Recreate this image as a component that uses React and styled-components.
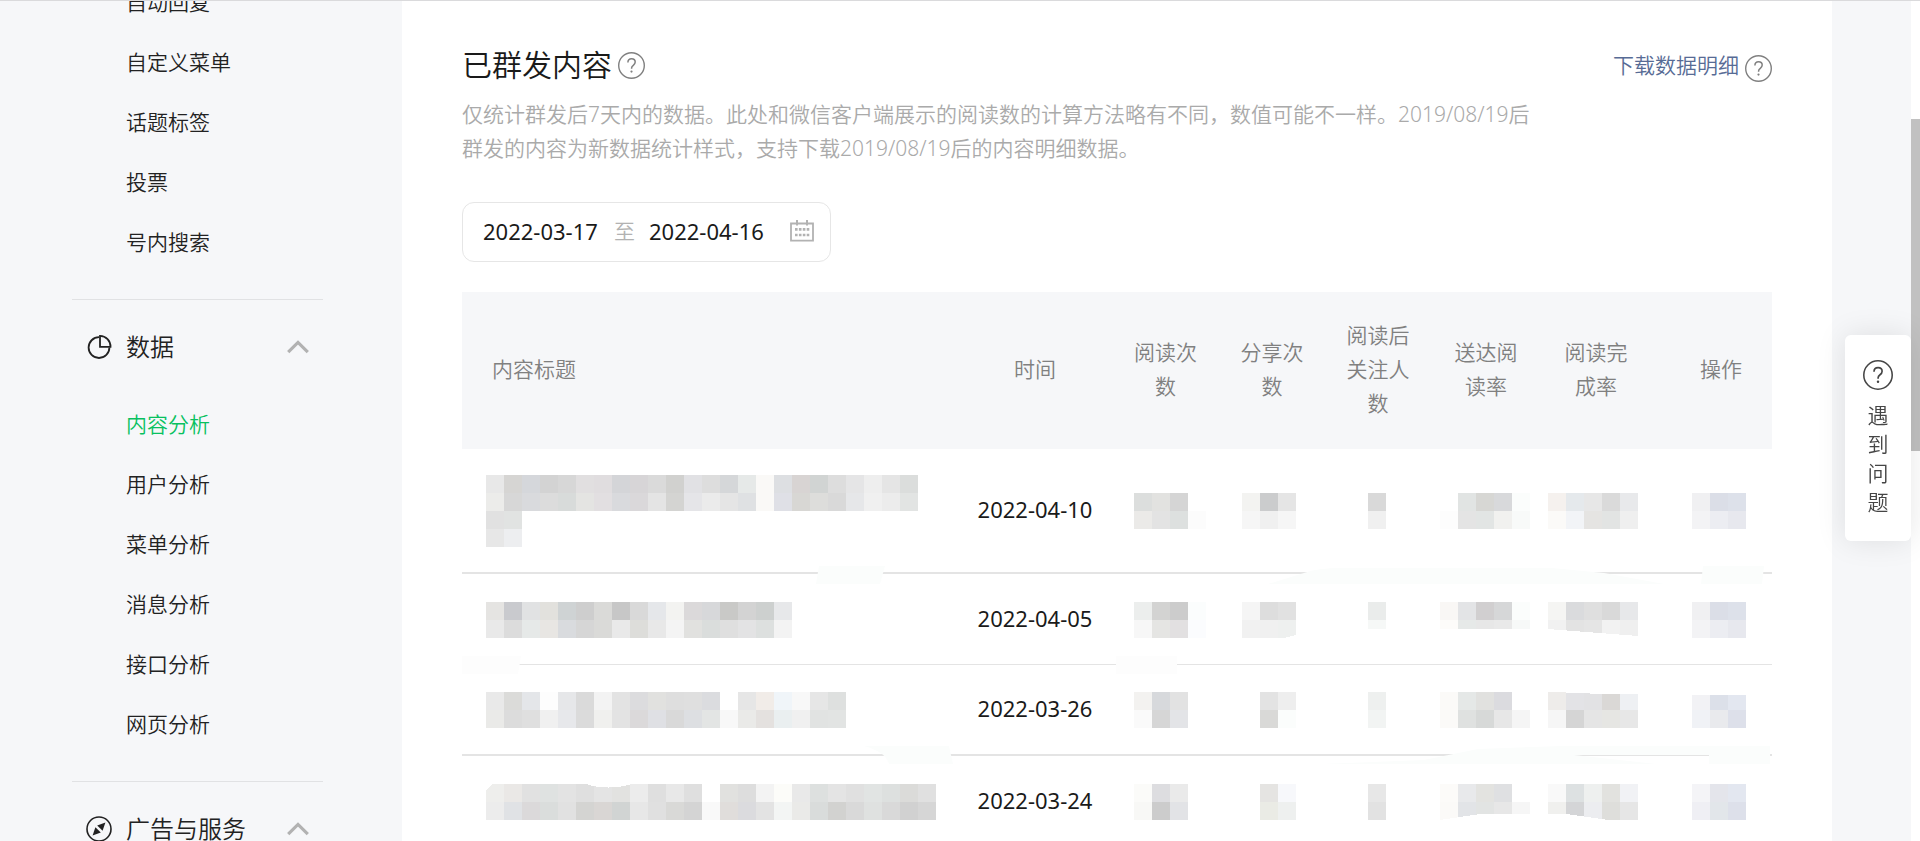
import styled, { createGlobalStyle, css } from "styled-components";

const GlobalStyle = createGlobalStyle`
  * {
    box-sizing: border-box;
  }

  body {
    margin: 0;
    background-color: #f6f7f9;
    color: #1a1a1a;
    font-family: "Noto Sans", "Noto Sans CJK SC", sans-serif;
    font-size: 21px;
    font-weight: 350;
    line-height: 34px;
  }

  button,
  input {
    font: inherit;
    color: inherit;
    border: none;
    padding: 0;
    background: none;
  }

  a {
    color: inherit;
    text-decoration: none;
  }
`;

const Page = styled.div`
  display: flex;
  height: 100vh;
  overflow: hidden;
  border-top: 1px solid #dadadc;
`;

const Sidebar = styled.nav`
  flex: 0 0 402px;
  padding: 0 79px 0 72px;
`;

const MenuList = styled.ul`
  list-style: none;
  margin: 0;
  padding: 0 0 27px 54px;
  border-bottom: 1px solid #e1e2e4;

  /* the first group is already scrolled past the top */
  &:first-child {
    margin-top: -29px;
  }
`;

const MenuLink = styled.a`
  display: block;
  line-height: 60px;
  color: ${(props) => (props.$active ? "#07c160" : "#222")};
`;

const MenuHeading = styled.button`
  display: flex;
  align-items: center;
  width: 100%;
  height: 94px;
  padding: 0 14px;
  font-size: 24px;
  color: #222;
  text-align: left;
`;

const MenuTitle = styled.span`
  flex: 1;
  padding-left: 14px;
`;

const Main = styled.main`
  flex: 1;
  min-width: 0;
  padding: 43px 60px 0;
  background-color: #fff;
`;

const Gutter = styled.div`
  flex: 0 0 79px;
`;

const ScrollTrack = styled.div`
  flex: 0 0 9px;
  padding-top: 118px;
  background-color: #fff;
`;

const ScrollThumb = styled.div`
  height: 332px;
  background-color: #c1c1c1;
`;

const Header = styled.header`
  display: flex;
  align-items: center;
  justify-content: space-between;
`;

const TitleGroup = styled.div`
  display: flex;
  align-items: center;
  gap: 6px;
`;

const Title = styled.h2`
  margin: 0;
  font-size: 30px;
  font-weight: 350;
  line-height: 42px;
`;

const Download = styled.div`
  display: flex;
  align-items: flex-end;
  gap: 6px;
`;

const DownloadLink = styled.a`
  color: #576b95;
`;

const HelpButton = styled.button`
  display: flex;
  color: #808080;
`;

const Description = styled.p`
  max-width: 1080px;
  margin: 11px 0 37px;
  color: #aaa;
`;

const DateRange = styled.div`
  display: flex;
  align-items: center;
  width: fit-content;
  height: 60px;
  padding: 0 16px 2px 20px;
  border: 1px solid #e6e6e6;
  border-radius: 12px;
`;

const DateInput = styled.input`
  width: 117px;
  font-size: 22px;
  font-weight: 400;
  outline: none;
`;

const DateDivider = styled.span`
  padding: 0 14px;
  color: #b2b2b2;
`;

const CalendarButton = styled.button`
  display: flex;
  margin-left: 24px;
`;

const TableWrap = styled.div`
  position: relative;
  margin-top: 30px;
`;

const Table = styled.table`
  width: 100%;
  table-layout: fixed;
  border-collapse: separate;
  border-spacing: 0;
`;

const Col = styled.col`
  width: ${(props) => props.$width};
`;

const Th = styled.th`
  height: 157px;
  padding: 0 20px 3px;
  background-color: #f6f7f9;
  color: #808080;
  font-weight: 350;
  text-align: center;

  ${(props) =>
    props.$align === "left" &&
    css`
      padding-left: 30px;
      text-align: left;
    `}
  ${(props) =>
    props.$align === "right" &&
    css`
      padding-right: 30px;
      text-align: right;
    `}
`;

const Row = styled.tr`
  height: ${(props) => (props.$tall ? "125px" : "91px")};
`;

const Td = styled.td`
  padding: 1px 0 0 ${(props) => props.$inset}px;
  border-bottom: ${(props) => (props.$thick ? "2px" : "1px")} solid #e4e4e4;
  vertical-align: middle;
`;

const DateTd = styled(Td)`
  padding: 0 0 3px;
  font-size: 22px;
  font-weight: 400;
  text-align: center;
`;

const MosaicSvg = styled.svg`
  display: block;
`;

const Strokes = styled.svg`
  position: absolute;
  top: 0;
  left: 0;
  overflow: visible;
  pointer-events: none;
`;

const Feedback = styled.button`
  position: fixed;
  top: 335px;
  right: 9px;
  display: flex;
  flex-direction: column;
  align-items: center;
  gap: 11px;
  width: 66px;
  padding: 25px 18px 24px;
  border-radius: 6px;
  background-color: #fff;
  box-shadow: 0 0 30px rgba(0, 0, 0, 0.1);
  color: #454545;
`;

const FeedbackText = styled.span`
  width: 21px;
  line-height: 29px;
  word-break: break-all;
`;

const CELL = 18;

/* Hidden values: two (or more) lines of colored cells, "-" leaves a hole. */
function Mosaic({ lines, trim }) {
  const rows = lines.map((line) => line.split(" "));
  const width = Math.max(...rows.map((row) => row.length)) * CELL;

  return (
    <MosaicSvg
      width={width}
      height={rows.length * CELL}
      shapeRendering="crispEdges"
      aria-hidden="true"
    >
      {rows.map((row, y) =>
        row.map(
          (color, x) =>
            color !== "-" && (
              <rect
                key={`${x}-${y}`}
                x={x * CELL}
                y={y * CELL}
                width={CELL}
                height={CELL}
                fill={`#${color}`}
              />
            )
        )
      )}
      {trim && <path d={trim} fill="#fff" />}
    </MosaicSvg>
  );
}

function HelpIcon({ size = 27 }) {
  return (
    <svg width={size} height={size} viewBox="0 0 27 27" fill="none">
      <circle cx="13.5" cy="13.5" r="12.8" stroke="currentColor" strokeWidth="1.4" />
      <path
        d="M9.9 10.6c0-2.3 1.5-3.8 3.7-3.8s3.6 1.3 3.6 3.3c0 1.5-.7 2.3-1.9 3.2-1.2.9-1.7 1.5-1.7 2.6v.9"
        stroke="currentColor"
        strokeWidth="1.5"
      />
      <circle cx="13.5" cy="19.6" r="1.1" fill="currentColor" />
    </svg>
  );
}

function PieIcon() {
  return (
    <svg width="26" height="26" viewBox="0 0 26 26" fill="none" stroke="#222" strokeWidth="1.8">
      <path d="M13 3.2a10.4 10.4 0 1 0 10.4 10.4" />
      <path d="M14 1.8v11h10.5A10.7 10.7 0 0 0 14 1.8z" />
    </svg>
  );
}

function CompassIcon() {
  return (
    <svg width="26" height="26" viewBox="0 0 26 26" fill="none">
      <circle cx="13" cy="13" r="12" stroke="#222" strokeWidth="1.6" />
      <path d="M19.4 6.6l-2.8 8.2-5.4-5.4z" fill="#222" />
      <path d="M6.6 19.4l2.8-8.2 5.4 5.4z" fill="#222" />
      <path d="M10.2 10.2l5.6 5.6" stroke="#f6f7f9" strokeWidth="1" />
    </svg>
  );
}

function ChevronIcon() {
  return (
    <svg width="22" height="14" viewBox="0 0 22 14" fill="none">
      <path d="M1.2 12.2L11 2.4l9.8 9.8" stroke="#b2b2b2" strokeWidth="3.2" />
    </svg>
  );
}

function CalendarIcon() {
  return (
    <svg width="24" height="22" viewBox="0 0 24 22" fill="none">
      <path d="M1 3.5h22v17.2H1z" stroke="#b2b2b2" strokeWidth="1.8" />
      <path d="M7 0v5.5M17 0v5.5" stroke="#b2b2b2" strokeWidth="2" />
      <path
        d="M5 9.4h14.5M5 15h14.5"
        stroke="#b2b2b2"
        strokeWidth="2.6"
        strokeDasharray="2.6 1.3"
      />
    </svg>
  );
}

const toolLinks = ["自动回复", "自定义菜单", "话题标签", "投票", "号内搜索"];
const dataLinks = ["内容分析", "用户分析", "菜单分析", "消息分析", "接口分析", "网页分析"];

const columns = [
  { label: "内容标题", width: "auto", align: "left", inset: 24 },
  { label: "时间", width: "154px" },
  { label: "阅读次数", width: "107px", inset: 22 },
  { label: "分享次数", width: "106px", inset: 23 },
  { label: "阅读后关注人数", width: "106px", inset: 43 },
  { label: "送达阅读率", width: "110px", inset: 9 },
  { label: "阅读完成率", width: "110px", inset: 7 },
  { label: "操作", width: "121px", align: "right", inset: 41 },
];

const articles = [
  {
    date: "2022-04-10",
    tall: true,
    thick: true,
    cells: [
      {
        lines: [
          "e8e8e8 d6d5d3 d5d7db d3d3d3 d7d7d7 e1dfe0 e0dddf d4d5d8 d7d5d7 dadada d1d1cf e1e1e4 dddddd d5d7d9 e6e9e8 faf9f7 dddfe2 d8d4d3 d1d4d3 dddddd e5e5e6 eeeeee e5e5e5 dbdddc",
          "ececea d7d7d7 d9dadd dcdcdc d8dbda e4e4e2 e2dfe1 d9dadd dad8da e4e4e4 d4d4d2 e5e5e8 ebebeb e5e5e5 dfe1e3 faf9f7 dfe0e6 d8d7d4 dddddb d9d9d9 e6e7e9 f0f0f0 ececec e2e4e3",
          "e1e1e1 e1e3e2",
          "e7e7e7 edeef0",
        ],
      },
      { lines: ["dcdedd e2e2e0 d5d5d5 -", "ebeae8 e3e3e3 dde0df fcfcfc"] },
      { lines: ["f3f3f1 cbcccd e5e5e5", "f6f6f6 f0f0f0 f6f6f6"] },
      { lines: ["d9d9d9", "f0f0f0"] },
      { lines: ["- e1e4e3 d7d7d4 d8d9db fbfdfc", "fdfdfd e4e4e4 e2e5e4 f1f1ef f8faf9"] },
      { lines: ["f5f1ee e5e9ec e7e7e7 dadada e8e9eb", "fbfaf8 f2f4f7 e5e4e2 e2e4e3 efefef"] },
      { lines: ["f0f0f2 dbdee7 dde1ea", "f3f3f5 ecedf2 e7e8ee"] },
    ],
  },
  {
    date: "2022-04-05",
    cells: [
      {
        lines: [
          "e5e4e2 c9cace e1e2e3 e2e1dd cfd3d4 cecece dadad8 c7c7c7 d9d9d9 e5e7ea f3f3f1 dbd9da d7d8da c9c9c7 d3d3d3 cdd0cf e7e8ea",
          "e9e9e9 dcdcdc e6e9e8 e8e6e3 d9dbde d6d6d6 dadad8 e9e9e9 ddddda e8e8e8 f4f4f4 e1e1df dadddc dfdfdf e3e3e4 dde0df f3f3f3",
        ],
      },
      { lines: ["eceeed d3d3d2 cccccc fbfdfd", "f7f7f7 e5e5e3 e2e0e1 fbfcfe"] },
      { lines: ["f5f5f5 dddddd e1e1e1", "f1f1f1 f0f0f0 eef0ef"], trim: "M42 36L54 33V36z" },
      { lines: ["eaeceb", "f6f8f7"], trim: "M0 27h18v9H0z" },
      {
        lines: ["f9f7f5 e3e4e6 d1cfd0 d6d7d8 fbfdfc", "fdfcfa e6e9e8 e7e7e7 e9e9e9 f7f9f8"],
        trim: "M0 27h90v9H0z",
      },
      {
        lines: ["f5f5f3 dadbdd dfdfdf d9d9d9 e7e8ea", "f1f1f1 e3e3e3 e5e5e5 f2f2f2 efefef"],
        trim: "M0 27L90 34V36H0z",
      },
      { lines: ["f0f0f2 dbdee7 dde1ea", "f3f3f5 ecedf2 e7e8ee"] },
    ],
  },
  {
    date: "2022-03-26",
    thick: true,
    cells: [
      {
        lines: [
          "e9e9e9 dbdbd9 e4e6e9 fdfdfd e6e7e9 dadada f3f3f3 e3e3e3 dcdcde e1e1df dedede dfdfdf dbdcdf - e6e6e6 f1ece8 f0f5f9 f8f8f8 e6e6e6 dee0df",
          "eaeae8 dcdcdc dfdfdf f0f0f0 e7e8eb dbdbdb f0f0ee e3e3e3 dbd9da dfe0e4 d9d9d9 dddfe2 e3e5e4 f8f8f8 eaeae8 e4e1df eaeff0 f0f0f0 e1e3e2 e2e4e3",
        ],
      },
      { lines: ["f3f2f0 d7d9dc e2e2e2 -", "fafafa d6d6d6 e3e4e7 -"] },
      { lines: ["- e3e3e3 eeeeee", "- d9d9d7 fbfdfc"] },
      { lines: ["eef0ef", "f2f4f3"] },
      { lines: ["fbfaf8 e5e8e7 e1e1df dbdbdf -", "fbfaf8 dfe1e0 d7d9d8 e7e7e7 f5f5f5"] },
      {
        lines: ["eeecea e3e3e6 e2e2e4 dad8d6 eef0f3", "f6f6f6 d5d5d5 e5e5e5 e6e6e3 e7e7e7"],
        trim: "M6 0L54 2H90V0z",
      },
      { lines: ["f2f2f5 dce0e9 e3e7f0", "f0f2f6 e9eaed dde0ea"], trim: "M0 0H54V3H0z" },
    ],
  },
  {
    date: "2022-03-24",
    cells: [
      {
        lines: [
          "eeeeec eae8e6 e1e1e1 dfe2e1 e3e3e3 dfdfdf e4e4e4 e2e2e0 ececec dfdfdf e8e8e8 dfdfdf - e1e1df dddddd f3f3f3 fcfcf9 e9e9e9 dde0df e4e4e4 e0e0e0 e1e4e3 dde0df dbdbd9 e0e0e0",
          "ececec e0e2e5 dbd9da dadddc e1e1e1 d4d4d2 d9d6d4 d1d4d3 e7e7e7 e0e0e0 d9d9d7 d4d4d4 f9f9f9 e0dddb dbdbde e3e3e3 f3f5f4 eaeae8 d9dcdb d2d2d0 d9d9d9 dfe1e0 d9d9d9 d1d1d1 d6d6d6",
        ],
        trim: "M0 0H6L0 6zM100 0Q122 7 146 0z",
      },
      { lines: ["fbfbf9 dddde0 eaeaea -", "f8f8f6 cccccc e2e3e6 -"] },
      { lines: ["- e5e4e2 f7f8fb", "- eaebe5 eef0ef"] },
      { lines: ["e7e7e7", "e2e2e2"] },
      {
        lines: ["fcfbf9 e8e9eb e3e3e0 dfe0e2 -", "fbfaf8 e2e4e7 e2e4e3 e7e7e7 f6f6f6"],
        trim: "M0 36L40 30H90V36z",
      },
      {
        lines: ["f9f9f9 dde1e2 eef0ef e2e2df f1f2f5", "f0f0ee d4d5d7 ecedf0 dededb e6e6e6"],
        trim: "M0 30H18L60 36H0z",
      },
      { lines: ["f4f4f7 e4e5eb e3e7f0", "efeff4 e2e6ea dde0ea"] },
    ],
  },
];

function MenuGroup({ icon, title }) {
  return (
    <MenuHeading type="button">
      {icon}
      <MenuTitle>{title}</MenuTitle>
      <ChevronIcon />
    </MenuHeading>
  );
}

function ArticleRow({ article }) {
  const [title, ...stats] = article.cells;

  return (
    <Row $tall={article.tall}>
      <Td $inset={columns[0].inset} $thick={article.thick}>
        <Mosaic {...title} />
      </Td>
      <DateTd $thick={article.thick}>{article.date}</DateTd>
      {stats.map((cell, i) => (
        <Td key={i} $inset={columns[i + 2].inset} $thick={article.thick}>
          <Mosaic {...cell} />
        </Td>
      ))}
    </Row>
  );
}

function App() {
  return (
    <>
      <GlobalStyle />
      <Page>
        <Sidebar>
          <MenuList>
            {toolLinks.map((label) => (
              <li key={label}>
                <MenuLink href="#">{label}</MenuLink>
              </li>
            ))}
          </MenuList>
          <MenuGroup icon={<PieIcon />} title="数据" />
          <MenuList>
            {dataLinks.map((label) => (
              <li key={label}>
                <MenuLink href="#" $active={label === "内容分析"}>
                  {label}
                </MenuLink>
              </li>
            ))}
          </MenuList>
          <MenuGroup icon={<CompassIcon />} title="广告与服务" />
        </Sidebar>

        <Main>
          <Header>
            <TitleGroup>
              <Title>已群发内容</Title>
              <HelpButton type="button" aria-label="说明">
                <HelpIcon />
              </HelpButton>
            </TitleGroup>
            <Download>
              <DownloadLink href="#">下载数据明细</DownloadLink>
              <HelpButton type="button" aria-label="下载说明">
                <HelpIcon />
              </HelpButton>
            </Download>
          </Header>
          <Description>
            仅统计群发后7天内的数据。此处和微信客户端展示的阅读数的计算方法略有不同，数值可能不一样。2019/08/19后群发的内容为新数据统计样式，支持下载2019/08/19后的内容明细数据。
          </Description>

          <DateRange>
            <DateInput aria-label="开始日期" defaultValue="2022-03-17" />
            <DateDivider>至</DateDivider>
            <DateInput aria-label="结束日期" defaultValue="2022-04-16" />
            <CalendarButton type="button" aria-label="选择日期">
              <CalendarIcon />
            </CalendarButton>
          </DateRange>

          <TableWrap>
            <Table>
              <colgroup>
                {columns.map((column) => (
                  <Col key={column.label} $width={column.width} />
                ))}
              </colgroup>
              <thead>
                <tr>
                  {columns.map((column) => (
                    <Th key={column.label} $align={column.align}>
                      {column.label}
                    </Th>
                  ))}
                </tr>
              </thead>
              <tbody>
                {articles.map((article) => (
                  <ArticleRow key={article.date} article={article} />
                ))}
              </tbody>
            </Table>
            {/* light brush strokes over the row lines */}
            <Strokes width="1310" height="560" fill="#fbfdfc" aria-hidden="true">
              <path d="M357 274H423L418 292H354z" />
              <path d="M806 292L842 281Q855 276 880 276H1090L1142 281L1202 292z" />
              <path d="M1241 274H1302L1300 292H1239z" />
              <path d="M0 364H59L56 382H0zM654 364H715V382H654z" fill="#fdfdfd" />
              <path d="M402 454H487L491 472H427Q424 460 402 454z" />
              <path d="M860 472L962 468L1016 457L1100 454H1307V463H1112L1194 472z" />
              <path d="M1247 454H1308V472H1247z" />
            </Strokes>
          </TableWrap>
        </Main>

        <Gutter />
        <ScrollTrack>
          <ScrollThumb />
        </ScrollTrack>
      </Page>

      <Feedback type="button">
        <HelpIcon size={30} />
        <FeedbackText>遇到问题</FeedbackText>
      </Feedback>
    </>
  );
}

export default App;
